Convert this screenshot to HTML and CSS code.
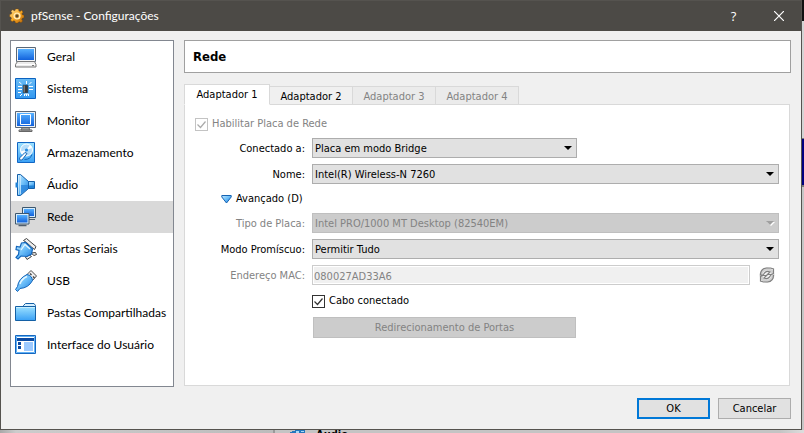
FILE: index.html
```html
<!DOCTYPE html>
<html lang="pt-BR">
<head>
<meta charset="utf-8">
<title>pfSense - Configurações</title>
<link rel="stylesheet" href="styles.css">
</head>
<body>
<svg class="defs" aria-hidden="true">
  <defs>
    <linearGradient id="blue" x1="0" y1="0" x2="0" y2="1"><stop offset="0" stop-color="#55b0ff"/><stop offset="1" stop-color="#1262dc"/></linearGradient>
    <linearGradient id="sky" x1="0" y1="0" x2="1" y2="1"><stop offset="0" stop-color="#c4e9ff"/><stop offset=".5" stop-color="#68bcf8"/><stop offset="1" stop-color="#1b79dc"/></linearGradient>
    <linearGradient id="folder" x1="0" y1="0" x2="0" y2="1"><stop offset="0" stop-color="#9ee2ff"/><stop offset="1" stop-color="#39a0f5"/></linearGradient>
    <linearGradient id="gold" x1="0" y1="0" x2="1" y2="1"><stop offset="0" stop-color="#ffe59a"/><stop offset=".5" stop-color="#f5a623"/><stop offset="1" stop-color="#b76508"/></linearGradient>
  </defs>
</svg>
<main class="dialog">
  <header class="titlebar">
    <svg class="gear" viewBox="0 0 16 16" aria-hidden="true">
      <path fill="url(#gold)" stroke="#7c4200" stroke-width=".4" d="M6.500 1h3l.4 1.900 1.200.5L12.800 2.300 14 4.200 12.800 5.700l.4 1.100 1.800.5v2.400l-1.800.5-.5 1.200 1 1.600-1.700 1.700-1.600-1-1.100.5L9 15H6.500L6 13.200l-1.200-.5-1.600 1-1.700-1.700 1-1.600-.5-1.100L.700 8.700V6.500l1.700-.4.5-1.300-1-1.500L3.700 1.700l1.500 1 .9-.3z"/>
      <circle cx="8" cy="8" r="3" fill="#ffc65c" stroke="#fff0c4" stroke-width="1.200"/>
      <circle cx="8" cy="8" r="1.700" fill="#5a4528"/>
    </svg>
    <h1>pfSense - Configurações</h1>
    <button class="caption" type="button" aria-label="Ajuda">?</button>
    <button class="caption" type="button" aria-label="Fechar"><svg class="close" viewBox="0 0 10 10"><path d="M0 0 10 10M10 0 0 10" stroke="#fff" stroke-width="1.200"/></svg></button>
  </header>
  <div class="content">
    <nav class="sidebar">
      <a href="#geral"><svg viewBox="0 0 22 22"><path fill="#f4f6f8" stroke="#596777" d="M1.500 1.500h19v14h-19z"/><path fill="url(#blue)" d="M3 3h16v11H3z"/><path fill="#ececec" stroke="#777" d="M2.500 15.500h17l1.500 3v2.500H.5v-2.500z"/><path stroke="#fff" d="M2 18.500h18"/><path stroke="#777" d="M17 19.500h2"/></svg>Geral</a>
      <a href="#sistema"><svg viewBox="0 0 22 22"><path fill="url(#folder)" stroke="#0b62c0" d="M.5.5h20v20H.5z"/><path fill="#2b8ee8" opacity=".45" d="M1 1h19v19H1z"/><path fill="#3a3a3a" stroke="#1d5e96" stroke-width=".6" d="M8 7h5v8H8z"/><path fill="#777" d="M8.500 7.500h1.500v7H8.500z"/><path fill="none" stroke="#fff" d="M3 8.500h4M3 11.500h4M3 14.500h3M14 8.500h4M14 11.500h4M11.500 3v3M4 4l2.500 2M16.500 4 14 6.500M5 18l2-2M9.500 18v-2h4V18M11.500 18v-2"/></svg>Sistema</a>
      <a href="#monitor"><svg viewBox="0 0 22 22"><path fill="#eef2f6" stroke="#596777" d="M.5 1.500h20v16H.5z"/><path fill="url(#blue)" d="M2 3h17v13H2z"/><path fill="none" stroke="#fff" d="M5.500 4.500h10v10h-10z"/><path fill="#d5d5d5" stroke="#666" d="M4 20h13v1.500H4zM7 18h7l1 2H6z"/></svg>Monitor</a>
      <a href="#armazenamento"><svg viewBox="0 0 22 22"><path fill="url(#folder)" stroke="#1166c4" d="M2.500.5h17v20h-17z"/><circle cx="11.500" cy="8" r="6" fill="#b5ddfa" stroke="#fff"/><path fill="#fff" d="M11.500 8 15 3a6 6 0 0 1 2 3zM11.500 8 7 12.500a6 6 0 0 1-1.500-3z"/><circle cx="11.500" cy="8" r="1.600" fill="#268be0"/><path fill="#fff" stroke="#1767b6" d="m10 10.500 2 1-5 6.500q-3 1-2.500-2z"/><path stroke="#1767b6" d="M9.500 17.500q6 0 7.500-5" fill="none"/></svg>Armazenamento</a>
      <a href="#audio"><svg viewBox="0 0 22 22"><path fill="url(#sky)" stroke="#145fa9" d="M13 7.500h6.500v7H13z"/><path fill="#2183d7" d="M14 11.500h5V14h-5z"/><path fill="url(#sky)" stroke="#145fa9" d="M2.500.5h3l8 7v7l-8 7h-3z"/><path fill="#2183d7" d="M.5 8.500H3v5H.5z"/><path fill="#2a86dc" d="M6 11h7v3.500L6 20z" opacity=".8"/><path stroke="#e3f5ff" d="M3.500 1.500v19M5.500 2v18" opacity=".6"/></svg>Áudio</a>
      <a class="active" href="#rede"><svg viewBox="0 0 22 22"><path fill="#d8edfc" stroke="#3c576e" d="M7.500 1.500h13v10h-13z"/><path fill="url(#blue)" d="M9 3h10v7H9z"/><path stroke="#4e5d6c" d="M14 13.500h6"/><path fill="#d8edfc" stroke="#3c576e" d="M.5 7.500h13.500v10.500H.5z"/><path fill="url(#blue)" d="M2 9h10.500v7.500H2z"/><path stroke="#4e5d6c" stroke-width="1.500" d="M3.500 19.500h8"/></svg>Rede</a>
      <a href="#seriais"><svg viewBox="0 0 22 22"><path fill="#eee" stroke="#444" d="M8.500 2.500 11.500.5 15 3.500l6 5-1.500 3-3-2.500-5-4.500zM16 15l4.500-.5 1 2-2.500 1zM10.500 19l4-2 2 1.500-4.500 3z"/><path fill="url(#sky)" stroke="#1366bc" stroke-width="1.200" d="m6.500 5 4-.5L17.500 11l-1 5-4.500 2.500-6-.5L3 21l-2-1.500L3.500 16.500 4 12.500 1 11.500 1.500 8.500 5 9z"/><path fill="none" stroke="#e5f7ff" stroke-width="1.200" d="m6 12 4-5.500 5 4.500"/></svg>Portas Seriais</a>
      <a href="#usb"><svg viewBox="0 0 22 22"><path fill="#eee" stroke="#4d4d4d" d="m12 4.500 4-4L21.500 6l-4 4.500z"/><path fill="#444" d="m15.500 3 1.500 1.500-1 1L14.500 4zM18.500 6 20 7.500l-1 1L17.500 7z"/><path fill="url(#sky)" stroke="#1366bc" d="M12 4.500q5 1 5.500 6-4 7.500-12.500 8l-2.500 3L.5 19.500 2.500 16.500Q3.500 8.500 12 4.500z"/><path fill="none" stroke="#e5f7ff" stroke-width="1.500" d="M5 14q1.500-5 7-7.500"/></svg>USB</a>
      <a href="#pastas"><svg viewBox="0 0 22 22"><path fill="#d7f0ff" stroke="#1460a5" d="M8.500 5V3.500L10.500 1.500h8.500l1.500 2V18H8.500z"/><path fill="url(#folder)" stroke="#1460a5" d="M.5 4.500h20v14H.5z"/><path stroke="#c8efff" d="M1 5.500h19"/></svg>Pastas Compartilhadas</a>
      <a href="#interface"><svg viewBox="0 0 22 22"><path fill="#fff" stroke="#1467c0" d="M.5 1.500h20v18H.5z"/><path fill="none" stroke="#5fb0f5" d="M1.500 2.500h18v16h-18z"/><path fill="#0b4aa2" d="M2 4h17v3H2zM3 8h3v3H3zM3 12h3v3H3z"/><path fill="#9dcaff" d="M9 8h9v9H9z"/></svg>Interface do Usuário</a>
    </nav>
    <section class="page">
      <h2>Rede</h2>
      <div class="tabs" role="tablist">
        <button type="button" role="tab" aria-selected="true">Adaptador 1</button>
        <button type="button" role="tab">Adaptador 2</button>
        <button type="button" role="tab" disabled>Adaptador 3</button>
        <button type="button" role="tab" disabled>Adaptador 4</button>
      </div>
      <form class="panel" id="settings">
        <label class="check off"><input type="checkbox" checked disabled><svg viewBox="0 0 13 13"><path d="m2.500 6.500 3 3 5-6"/></svg>Habilitar Placa de Rede</label>
        <div class="fields">
          <label for="mode">Conectado a:</label>
          <div class="combo short"><select id="mode"><option>Placa em modo Bridge</option></select></div>
          <label for="name">Nome:</label>
          <div class="combo"><select id="name"><option>Intel(R) Wireless-N 7260</option></select></div>
          <button class="advanced" type="button"><svg viewBox="0 0 11 9"><path fill="url(#sky)" stroke="#1462b2" d="M.8.5h9.400v1.500L5.500 8 .8 2z"/></svg>Avançado (D)</button>
          <label class="off" for="type">Tipo de Placa:</label>
          <div class="combo"><select id="type" disabled><option>Intel PRO/1000 MT Desktop (82540EM)</option></select></div>
          <label for="promisc">Modo Promíscuo:</label>
          <div class="combo"><select id="promisc"><option>Permitir Tudo</option></select></div>
          <label class="off" for="mac">Endereço MAC:</label>
          <div class="mac"><input id="mac" type="text" value="080027AD33A6" disabled><button type="button" aria-label="Gerar novo endereço MAC" disabled><svg viewBox="0 0 16 16"><circle cx="8" cy="8" r="6" fill="#f2f2f2" stroke="#d0d0d0" stroke-width="3"/><path fill="none" stroke="#808080" stroke-width="1.200" d="M1.500 8q0-6.500 6-7h4l3 1v4.500l-2 1h-4l2.500-2.500q-3-1.500-5 .5l-2 2.500zM14.500 8q0 6.500-6 7h-4l-3-1V9.500l2-1h4L5 11q3 1.500 5-.5l2-2.500"/></svg></button></div>
          <label class="check cable"><input type="checkbox" checked><svg viewBox="0 0 13 13"><path d="m2.500 6.500 3 3 5-6"/></svg>Cabo conectado</label>
          <button class="push forward" type="button" disabled>Redirecionamento de Portas</button>
        </div>
      </form>
    </section>
  </div>
  <footer class="actions">
    <button class="push primary" type="submit" form="settings">OK</button>
    <button class="push" type="button">Cancelar</button>
  </footer>
</main>
<div class="edge-right"></div>
<div class="edge-bottom"><svg viewBox="0 0 16 3"><path fill="#2377bd" d="M2 1h3V0h10v3H0V2h2z"/><path fill="#a9d8f5" d="M6 1h3v2H6zM11 1h3v1h-3z"/></svg><b>Áudio</b></div>
</body>
</html>
```
FILE: styles.css
```css
* { box-sizing: border-box; }

body {
  margin: 0;
  min-height: 100vh;
  display: grid;
  grid-template-columns: 1fr 2px;
  grid-template-rows: 1fr 3px;
  background: #c2c2c2;
  color: #000;
  font: 11px/16px "DejaVu Sans Condensed", Tahoma, sans-serif;
}

button, input, select { font: inherit; color: inherit; margin: 0; }
svg { display: block; flex: none; }
.defs { position: absolute; width: 0; height: 0; }

.dialog {
  display: flex;
  flex-direction: column;
  background: #f0f0f0;
  border: 1px solid #55534f;
}

.titlebar {
  display: flex;
  align-items: center;
  height: 30px;
  padding-left: 8px;
  background: #4c4a46;
  color: #fff;
}
.gear { width: 16px; height: 16px; margin-right: 6px; }
h1 {
  flex: 1;
  margin: 0;
  font: 12px/16px Lato, sans-serif;
}
.caption {
  display: flex;
  align-items: center;
  justify-content: center;
  width: 45px;
  height: 30px;
  padding: 0;
  border: 0;
  background: none;
  font: 13px/16px "Open Sans", sans-serif;
}
.close { width: 10px; height: 10px; }

.content {
  flex: 1;
  display: flex;
  gap: 10px;
  padding: 9px 10px 0 9px;
}

.sidebar {
  flex: none;
  width: 164px;
  background: #fff;
  border: 1px solid #828790;
}
.sidebar a {
  display: flex;
  align-items: center;
  gap: 10px;
  height: 32px;
  padding-left: 4px;
  color: #000;
  font: 12px/16px Lato, sans-serif;
  text-decoration: none;
  white-space: nowrap;
}
.sidebar svg { width: 22px; height: 22px; }
.sidebar .active { background: #d9d9d9; }

.page {
  flex: 1;
  min-width: 0;
  display: flex;
  flex-direction: column;
}
h2 {
  margin: 0 0 11px;
  padding: 1px 8px 0;
  background: #fff;
  border: 1px solid #a0a0a0;
  font: bold 13px/30px "DejaVu Sans Condensed", Tahoma, sans-serif;
}

.tabs {
  display: flex;
  align-items: flex-end;
  height: 21px;
  z-index: 1;
}
.tabs button {
  flex: none;
  width: 83px;
  height: 19px;
  padding: 2px 0 0;
  background: #f0f0f0;
  border: 1px solid #d9d9d9;
  border-left: 0;
  line-height: 14px;
}
.tabs button[aria-selected] {
  width: 86px;
  height: 21px;
  padding: 0;
  background: #fff;
  border-left: 1px solid #d9d9d9;
  border-bottom-color: #fff;
}
.tabs button:disabled { background: #ebebeb; color: #838383; }

.panel {
  flex: 1;
  margin: -1px 1px 1px 0;
  padding: 9px 10px;
  background: #fff;
  border: 1px solid #d9d9d9;
}

.off { color: #838383; }
.check {
  display: flex;
  align-items: center;
  height: 20px;
}
.check input {
  appearance: none;
  flex: none;
  width: 13px;
  height: 13px;
  border: 1px solid #333;
  background: #fff;
}
.check svg {
  width: 13px;
  height: 13px;
  margin: 0 4px 0 -13px;
  fill: none;
  stroke: #333;
  stroke-width: 1.2;
  z-index: 1;
}
.check.off input { border-color: #c3c3c3; }
.check.off svg { stroke: #aaa; }

.fields {
  display: grid;
  grid-template-columns: 110px 1fr;
  gap: 6px 7px;
  align-items: center;
  margin-top: 4px;
}
.fields > label:not(.check) { padding-top: 2px; text-align: right; }
.cable, .forward { grid-column: 2; }

.combo { position: relative; height: 20px; }
.short { max-width: 265px; }
.combo select {
  appearance: none;
  display: block;
  width: 100%;
  height: 20px;
  padding: 2px 20px 0 2px;
  background: #e1e1e1;
  border: 1px solid #adadad;
  border-radius: 0;
}
.combo select:disabled {
  background: #ccc;
  border-color: #bfbfbf;
  color: #838383;
  opacity: 1;
}
.combo::after {
  content: "";
  position: absolute;
  top: 8px;
  right: 5px;
  border: 4px solid transparent;
  border-top-color: #000;
  border-bottom: 0;
}
.combo:has(:disabled)::after {
  border-top-color: #a0a0a0;
  filter: drop-shadow(1px 1px 0 #fff);
}

.advanced {
  grid-column: 1 / -1;
  display: flex;
  align-items: center;
  gap: 4px;
  height: 17px;
  padding: 1px 0 0 26px;
  background: none;
  border: 0;
}
.advanced svg { width: 11px; height: 9px; }

.mac { display: flex; align-items: center; gap: 9px; }
.mac input {
  flex: 1;
  min-width: 0;
  height: 20px;
  padding: 2px 1px 0;
  background: #f0f0f0;
  border: 1px solid #ccc;
  box-shadow: inset 0 0 0 1px #fff;
  color: #838383;
}
.mac button { padding: 0; margin-right: 4px; border: 0; background: none; }
.mac svg { width: 16px; height: 16px; }

.push {
  width: 73px;
  height: 21px;
  padding: 1px 0 0;
  background: #e1e1e1;
  border: 1px solid #adadad;
}
.push:disabled { background: #ccc; border-color: #bfbfbf; color: #838383; }
.forward { width: 100%; max-width: 263px; margin-left: 1px; }
.primary { border: 2px solid #0078d7; }

.actions {
  display: flex;
  justify-content: flex-end;
  gap: 8px;
  padding: 11px 10px 10px;
}

.edge-right {
  background: linear-gradient(#111 0 5%, #d4d4d4 5% 32%, #777 32% 32.4%, #00007f 32.4% 43%, #777 43% 43.4%, #c6c6c6 43.4%);
}
.edge-bottom {
  grid-column: 1 / -1;
  display: flex;
  height: 3px;
  padding-left: 290px;
  overflow: hidden;
  background: linear-gradient(90deg, #a8a8a8, #ccc 2%, #bcbcbc 34%, #999 34% 34.2%, #c4c4c4 34.2% 97%, #ddd);
}
.edge-bottom svg { width: 16px; height: 3px; }
.edge-bottom b { margin-left: 10px; line-height: 10px; }
```
